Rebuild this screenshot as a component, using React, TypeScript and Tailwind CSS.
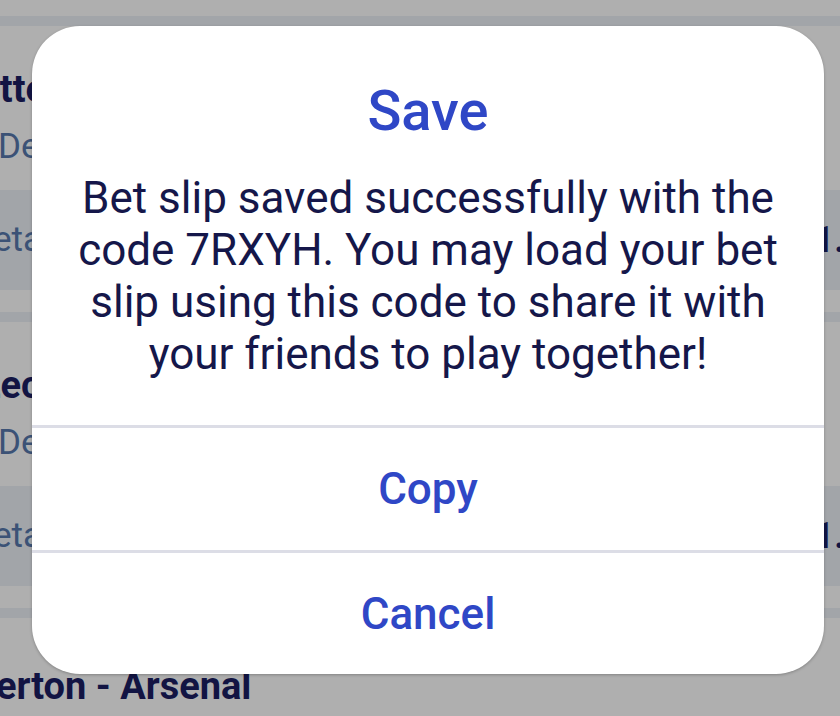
const font = { fontFamily: 'Roboto, "Noto Sans", sans-serif' };

function Band({ left, right }: { left: string; right: string }) {
  return (
    <div className="flex h-[100px] items-center justify-between overflow-hidden bg-[#a2a5a9]">
      <span className="ml-[-30px] text-[35px] text-[#3b5276]">{left}</span>
      <span className="mr-[-46px] text-[36px] font-bold text-[#121443]">{right}</span>
    </div>
  );
}

function Gap() {
  return (
    <div>
      <div className="h-[22px]" />
      <div className="h-[10px] bg-[#a2a5a9]" />
    </div>
  );
}

function MatchHead({ title, shift, sub }: { title: string; shift: string; sub: string }) {
  return (
    <div className="flex h-[164px] flex-col justify-center gap-[14px] overflow-hidden pt-[20px]">
      <span className={`${shift} whitespace-nowrap text-[38px] font-bold leading-[44px] text-[#121443]`}>{title}</span>
      <span className="ml-[-2px] whitespace-nowrap text-[35px] leading-[44px] text-[#3b5276]">{sub}</span>
    </div>
  );
}

export default function App() {
  return (
    <div className="relative h-[716px] w-[840px] overflow-hidden bg-[#afafaf]" style={font}>
      {/* dimmed page behind the dialog */}
      <div className="flex flex-col">
        <div className="h-[16px]" />
        <div className="h-[10px] bg-[#a2a5a9]" />
        <MatchHead title="Tottenham - Chelsea" shift="ml-[-42px]" sub="Dec 14, 17:30" />
        <Band left="Details" right="1.85" />
        <Gap />
        <MatchHead title="Lecce - Roma" shift="ml-[-20px]" sub="Dec 15, 20:45" />
        <Band left="Details" right="1.92" />
        <Gap />
        <div className="overflow-hidden pt-[46px]">
          <span className="ml-[-44px] whitespace-nowrap text-[38px] font-bold leading-[44px] text-[#121443]">
            Everton - Arsenal
          </span>
        </div>
      </div>

      {/* dialog */}
      <div className="absolute left-[32px] top-[26px] flex w-[792px] flex-col overflow-hidden rounded-[48px] bg-white shadow-[0_1px_3px_rgba(0,0,0,0.25)]">
        <div className="flex flex-col items-center px-4 pb-[45px] pt-[53px] text-center">
          <h1 className="text-[56px] font-medium leading-[64px] text-[#2f47c6]">Save</h1>
          <p className="mt-[29px] whitespace-nowrap text-[44px] leading-[52px] text-[#15174a]">
            Bet slip saved successfully with the
            <br />
            code 7RXYH. You may load your bet
            <br />
            slip using this code to share it with
            <br />
            your friends to play together!
          </p>
        </div>
        <div className="h-[3px] bg-[#dcdde6]" />
        <button className="flex h-[122px] items-center justify-center text-[44px] font-medium text-[#2f47c6]">
          Copy
        </button>
        <div className="h-[3px] bg-[#dcdde6]" />
        <button className="flex h-[121px] items-center justify-center text-[44px] font-medium text-[#2f47c6]">
          Cancel
        </button>
      </div>
    </div>
  );
}
